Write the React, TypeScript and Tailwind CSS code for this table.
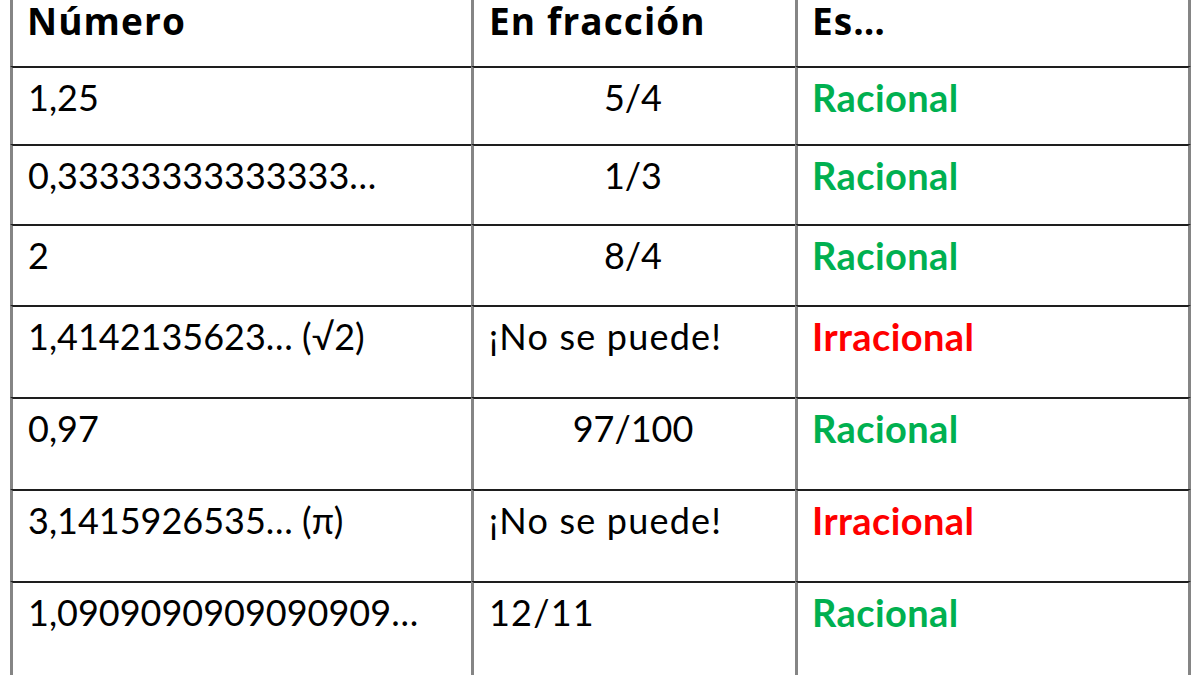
const ROWS: {
  num: string;
  frac: string;
  center: boolean;
  kind: "Racional" | "Irracional";
  h: string;
}[] = [
  { num: "1,25", frac: "5/4", center: true, kind: "Racional", h: "h-[78px]" },
  { num: "0,33333333333333…", frac: "1/3", center: true, kind: "Racional", h: "h-[80px]" },
  { num: "2", frac: "8/4", center: true, kind: "Racional", h: "h-[81px]" },
  { num: "1,4142135623… (√2)", frac: "¡No se puede!", center: false, kind: "Irracional", h: "h-[92px]" },
  { num: "0,97", frac: "97/100", center: true, kind: "Racional", h: "h-[92px]" },
  { num: "3,1415926535… (π)", frac: "¡No se puede!", center: false, kind: "Irracional", h: "h-[92px]" },
  { num: "1,0909090909090909…", frac: "12/11", center: false, kind: "Racional", h: "h-[110px]" },
];

const COLS = "grid grid-cols-[461px_324px_396px]";
const CELL = "border-l-[3px] border-[#858585]";
const HEAD =
  "font-['Open_Sans',Lato,sans-serif] text-[37px] font-bold leading-[1.15] tracking-[1.1px] whitespace-nowrap";

export default function App() {
  return (
    <div
      className="h-[675px] w-[1200px] overflow-hidden bg-white pl-[10px] text-black"
      style={{ fontFamily: "Lato, 'Open Sans', sans-serif" }}
    >
      {/* Header row */}
      <div className={`${COLS} h-[66px]`}>
        <div className={`${CELL} pl-[14px]`}>
          <div className={HEAD}>Número</div>
        </div>
        <div className={`${CELL} pl-[15px]`}>
          <div className={HEAD}>En fracción</div>
        </div>
        <div className={`${CELL} border-r-[3px] pl-[14px]`}>
          <div className={HEAD}>Es…</div>
        </div>
      </div>

      {ROWS.map((r, i) => (
        <div key={i} className={`${COLS} ${r.h}`}>
          <div className={`${CELL} border-t-2 border-t-[#1e1e1e] pl-[15px] pt-[11px]`}>
            <div className="text-[36px] leading-none whitespace-nowrap">{r.num}</div>
          </div>
          <div
            className={`${CELL} border-t-2 border-t-[#1e1e1e] pt-[11px] ${
              r.center ? "pr-[3px] text-center" : "pl-[15px]"
            }`}
          >
            <div
              className={`text-[36px] leading-none whitespace-nowrap ${
                r.center ? "" : "tracking-[1.2px]"
              }`}
            >
              {r.frac}
            </div>
          </div>
          <div className={`${CELL} border-r-[3px] border-t-2 border-t-[#1e1e1e] pl-[14px] pt-[10px]`}>
            <div
              className={`text-[38px] font-bold leading-none tracking-[0.4px] ${
                r.kind === "Racional" ? "text-[#00b050]" : "text-[#ff0000]"
              }`}
            >
              {r.kind}
            </div>
          </div>
        </div>
      ))}
    </div>
  );
}
